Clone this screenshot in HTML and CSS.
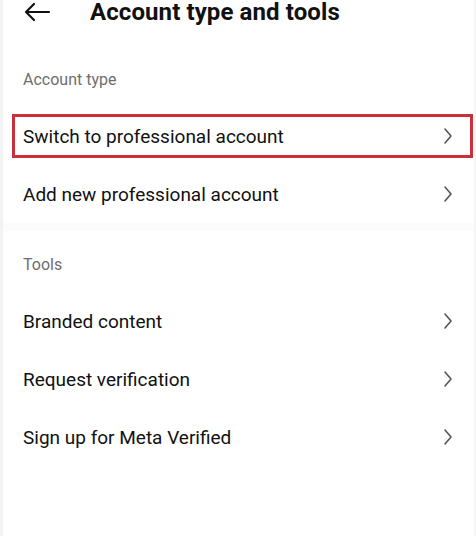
FILE: index.html
```html
<!DOCTYPE html>
<html lang="en">
<head>
    <meta charset="utf-8"/>
    <title>Account type and tools</title>
    <link rel="stylesheet" href="styles.css">
</head>
<body>
    <div class="screen">
        <header class="topbar">
            <svg class="back" width="28" height="20" viewBox="0 0 28 20">
                <path d="M26 10H3M11 2L3 10l8 8" fill="none" stroke="#111" stroke-width="2.2" stroke-linecap="round" stroke-linejoin="round"/>
            </svg>
            <h1>Account type and tools</h1>
        </header>

        <section class="group">
            <h3>Account type</h3>
            <div class="row marked">
                <span>Switch to professional account</span>
                <svg class="chev" width="10" height="18" viewBox="0 0 10 18"><path d="M2 2l6 7-6 7" fill="none" stroke="#555" stroke-width="1.6" stroke-linecap="round" stroke-linejoin="round"/></svg>
            </div>
            <div class="row">
                <span>Add new professional account</span>
                <svg class="chev" width="10" height="18" viewBox="0 0 10 18"><path d="M2 2l6 7-6 7" fill="none" stroke="#555" stroke-width="1.6" stroke-linecap="round" stroke-linejoin="round"/></svg>
            </div>
        </section>

        <div class="divider"></div>

        <section class="group">
            <h3 class="tools">Tools</h3>
            <div class="row">
                <span>Branded content</span>
                <svg class="chev" width="10" height="18" viewBox="0 0 10 18"><path d="M2 2l6 7-6 7" fill="none" stroke="#555" stroke-width="1.6" stroke-linecap="round" stroke-linejoin="round"/></svg>
            </div>
            <div class="row">
                <span>Request verification</span>
                <svg class="chev" width="10" height="18" viewBox="0 0 10 18"><path d="M2 2l6 7-6 7" fill="none" stroke="#555" stroke-width="1.6" stroke-linecap="round" stroke-linejoin="round"/></svg>
            </div>
            <div class="row">
                <span>Sign up for Meta Verified</span>
                <svg class="chev" width="10" height="18" viewBox="0 0 10 18"><path d="M2 2l6 7-6 7" fill="none" stroke="#555" stroke-width="1.6" stroke-linecap="round" stroke-linejoin="round"/></svg>
            </div>
        </section>
    </div>
</body>
</html>
```

FILE: styles.css
```css
*{
    margin: 0;
    padding: 0;
    box-sizing: border-box;
}
body{
    width: 476px;
    height: 536px;
    background: #fff;
    font-family: Roboto, "Liberation Sans", sans-serif;
    color: #111;
    overflow: hidden;
}
.screen{
    height: 536px;
    border-left: 3px solid #f3f3f3;
    border-right: 2px solid #f5f5f5;
}
.topbar{
    display: flex;
    align-items: center;
    height: 24px;
    padding-left: 20px;
}
.back{
    margin-right: 39px;
}
.topbar h1{
    font-size: 24px;
    line-height: 24px;
    font-weight: 700;
    letter-spacing: 0.1px;
}
.group{
    display: flex;
    flex-direction: column;
}
.group h3{
    font-size: 16px;
    font-weight: 400;
    line-height: 18px;
    color: #6e6e6e;
    padding: 47px 0 0 20px;
    height: 83px;
}
.group h3.tools{
    padding-top: 25px;
    height: 61px;
}
.row{
    display: flex;
    justify-content: space-between;
    align-items: center;
    height: 58px;
    padding: 0 21px 0 20px;
    font-size: 19px;
}
.marked{
    height: 44px;
    margin: 7px 1px 7px 9px;
    padding-left: 8px;
    padding-right: 17px;
    border: 3px solid #c9303b;
}
.divider{
    height: 8px;
    background: #fbfbfb;
}
```
